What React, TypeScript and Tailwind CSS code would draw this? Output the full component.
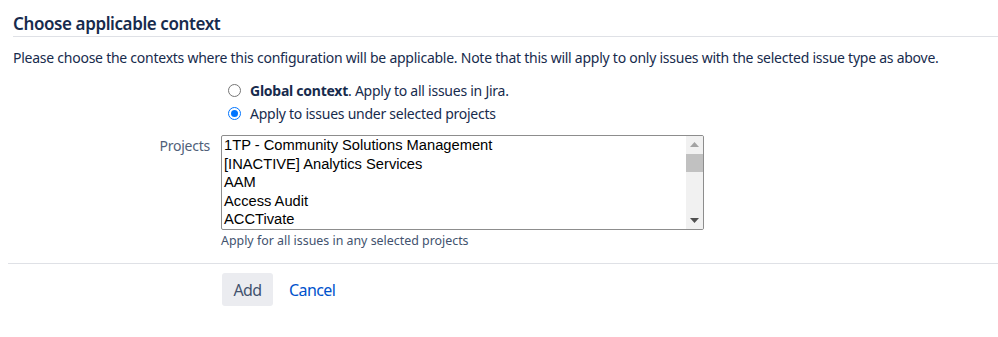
import React from "react";

const projects = [
  "1TP - Community Solutions Management",
  "[INACTIVE] Analytics Services",
  "AAM",
  "Access Audit",
  "ACCTivate",
];

export default function App() {
  return (
    <div
      className="w-[998px] h-[337px] bg-white pl-[8px] text-[#172b4d] tracking-[-0.25px]"
      style={{ fontFamily: '"Noto Sans", "Open Sans", sans-serif' }}
    >
      <h2 className="ml-[5px] mt-[12px] h-[25px] border-b border-[#dfe1e6] text-[17px] leading-[24px] tracking-[-0.4px] font-semibold text-[#172b4d]">
        Choose applicable context
      </h2>
      <p className="ml-[5px] mt-[11px] text-[14px] leading-[20px]">
        Please choose the contexts where this configuration will be applicable. Note that this will apply to only issues with the selected issue type as above.
      </p>

      <div className="mt-[11px] ml-[213px] flex flex-col">
        <label className="flex items-center h-[23px] ml-[7px] text-[14px]">
          <span className="w-[13px] h-[13px] rounded-full border border-[#767676] bg-white" />
          <span className="ml-[9px]">
            <b className="font-bold">Global context</b>. Apply to all issues in Jira.
          </span>
        </label>
        <label className="flex items-center h-[23px] ml-[7px] text-[14px]">
          <span className="w-[13px] h-[13px] rounded-full border-[1.5px] border-[#0075ff] bg-white flex items-center justify-center">
            <span className="w-[7px] h-[7px] rounded-full bg-[#0075ff]" />
          </span>
          <span className="ml-[9px]">Apply to issues under selected projects</span>
        </label>
      </div>

      <div className="mt-[10px] flex">
        <div className="w-[202px] text-right text-[14px] leading-[20px] pt-[1px] text-[#505f79]">
          Projects
        </div>
        <div className="ml-[11px]">
          <div className="w-[483px] h-[95px] border border-[#8d8d8d] rounded-[2px] flex overflow-hidden">
            <div
              className="flex-1 pl-[2px] text-[14.7px] leading-[18.5px] tracking-normal text-black"
              style={{ fontFamily: '"Liberation Sans", Arial, sans-serif' }}
            >
              {projects.map((p) => (
                <div key={p} className="whitespace-nowrap">
                  {p}
                </div>
              ))}
            </div>
            <div className="w-[17px] bg-[#f1f1f1] flex flex-col items-center">
              <div className="h-[17px] flex items-center justify-center">
                <svg width="9" height="5" viewBox="0 0 9 5">
                  <path d="M0 5 L4.5 0 L9 5 Z" fill="#a3a3a3" />
                </svg>
              </div>
              <div className="w-[17px] h-[18px] mt-[1px] bg-[#c1c1c1]" />
              <div className="flex-1" />
              <div className="h-[17px] flex items-center justify-center">
                <svg width="9" height="5" viewBox="0 0 9 5">
                  <path d="M0 0 L9 0 L4.5 5 Z" fill="#505050" />
                </svg>
              </div>
            </div>
          </div>
          <div className="mt-[3px] text-[12.4px] leading-[16px] tracking-normal text-[#42526e]">
            Apply for all issues in any selected projects
          </div>
        </div>
      </div>

      <div className="mt-[14px] h-px bg-[#dfe1e6]" />

      <div className="mt-[9px] ml-[214px] flex items-center tracking-[-0.6px]">
        <button className="h-[33px] w-[51px] rounded-[3px] bg-[#ebecf0] text-[16px] text-[#42526e]">
          Add
        </button>
        <a className="ml-[16px] text-[16px] text-[#0052cc]" href="#">
          Cancel
        </a>
      </div>
    </div>
  );
}
